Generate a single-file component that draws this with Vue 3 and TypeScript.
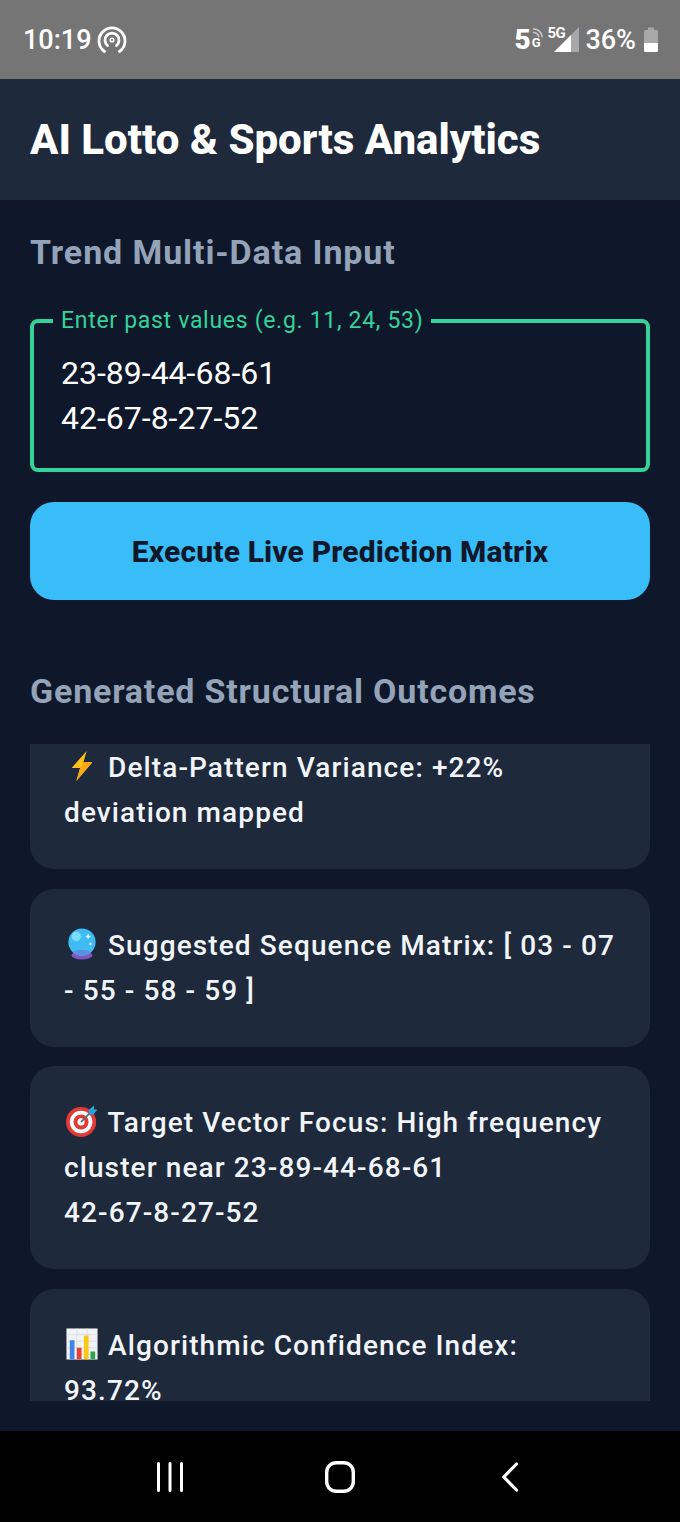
<script setup lang="ts">
import { onMounted, ref } from 'vue'

const results = [
  { icon: 'bolt', text: 'Delta-Pattern Variance: +22% deviation mapped' },
  { icon: 'ball', text: 'Suggested Sequence Matrix: [ 03 - 07 - 55 - 58 - 59 ]' },
  { icon: 'target', text: 'Target Vector Focus: High frequency cluster near 23-89-44-68-61\n42-67-8-27-52' },
  { icon: 'chart', text: 'Algorithmic Confidence Index: 93.72%' },
]

const pastValues = ref('23-89-44-68-61\n42-67-8-27-52')
const listEl = ref<HTMLElement | null>(null)

onMounted(() => {
  // the list sits slightly scrolled in the capture
  if (listEl.value) listEl.value.scrollTop = 33
})
</script>

<template>
  <div class="phone">
    <div class="status-bar">
      <div class="status-left">
        <span>10:19</span>
        <svg class="hotspot" width="30" height="28" viewBox="0 0 30 28" fill="none" stroke="#fff" stroke-linecap="round">
          <path d="M7.5 25.5A13 13 0 1 1 22.5 25.5" stroke-width="2.8" />
          <path d="M10.5 19.5A7 7 0 1 1 19.5 19.5" stroke-width="2.8" />
          <circle cx="15" cy="14" r="1.8" stroke-width="1.6" />
        </svg>
      </div>
      <div class="status-right">
        <span class="net"><b>5</b><i>G</i>
          <svg class="net-waves" width="12" height="12" viewBox="0 0 14 14" fill="none" stroke="#c9c9c9" stroke-width="1.8">
            <path d="M1 2.5A10 10 0 0 1 12 12" />
            <path d="M1 6.5A6 6 0 0 1 8 12" />
          </svg>
        </span>
        <span class="signal">
          <span class="signal-label">5G</span>
          <svg width="25" height="25" viewBox="0 0 25 25">
            <path d="M25 0V25H0Z" fill="#a8a8a8" />
            <path d="M17 8V25H0Z" fill="#fff" />
          </svg>
        </span>
        <span class="battery-text">36%</span>
        <svg width="14" height="25" viewBox="0 0 14 25">
          <path d="M4 0.500H10V3H12.500A1.500 1.500 0 0 1 14 4.500V23.500A1.500 1.500 0 0 1 12.500 25H1.500A1.500 1.500 0 0 1 0 23.500V4.500A1.500 1.500 0 0 1 1.500 3H4Z" fill="#a8a8a8" />
          <path d="M0 16H14V23.500A1.500 1.500 0 0 1 12.500 25H1.500A1.500 1.500 0 0 1 0 23.500Z" fill="#fff" />
        </svg>
      </div>
    </div>

    <header class="app-header">
      <h1>AI Lotto &amp; Sports Analytics</h1>
    </header>

    <main class="content">
      <h2 class="section-title">Trend Multi-Data Input</h2>

      <fieldset class="input-box">
        <legend>Enter past values (e.g. 11, 24, 53)</legend>
        <textarea v-model="pastValues" rows="2" spellcheck="false"></textarea>
      </fieldset>

      <button class="run-btn" type="button">Execute Live Prediction Matrix</button>

      <h2 class="section-title outcomes">Generated Structural Outcomes</h2>

      <div ref="listEl" class="result-list">
        <div v-for="item in results" :key="item.icon" class="result-card">
          <svg v-if="item.icon === 'bolt'" class="emoji" viewBox="0 0 34 34">
            <path d="M22 1 6 19H15L11 33 28 13H18.500Z" fill="#fcc21b" />
            <path d="M18.500 13H28L11 33 15 19Z" fill="#f7a817" />
          </svg>
          <svg v-else-if="item.icon === 'ball'" class="emoji" viewBox="0 0 34 34">
            <ellipse cx="17" cy="29" rx="11" ry="4.500" fill="#7e57c2" />
            <circle cx="17" cy="15" r="14.500" fill="#3fbdf3" />
            <ellipse cx="17" cy="26" rx="9" ry="3" fill="#5c8fe0" />
            <circle cx="11" cy="9" r="5" fill="#7fdcfb" />
            <path d="M23.500 6l1 2 2 1-2 1-1 2-1-2-2-1 2-1zM26 15l.7 1.300 1.300.7-1.300.7-.7 1.300-.7-1.300-1.300-.7 1.300-.7z" fill="#d6f3ff" />
          </svg>
          <svg v-else-if="item.icon === 'target'" class="emoji" viewBox="0 0 34 34">
            <circle cx="16" cy="18" r="16" fill="#e53935" />
            <circle cx="16" cy="18" r="12" fill="#fff" />
            <circle cx="16" cy="18" r="8" fill="#e53935" />
            <circle cx="16" cy="18" r="3.800" fill="#fff" />
            <path d="M16 18 27 7" stroke="#546e7a" stroke-width="1.800" />
            <path d="M24 5.500 29.500 0.500 30 4.500 33.500 5 28.500 10.500 25 10Z" fill="#29a3d8" />
          </svg>
          <svg v-else class="emoji" viewBox="0 0 34 34">
            <rect x="0.500" y="0.500" width="33" height="33" fill="#f1f3f4" />
            <path d="M0.500 7H33.500M0.500 14H33.500M0.500 21H33.500M0.500 28H33.500M11.500 0.500V33.500M22.500 0.500V33.500" stroke="#d5d9dc" stroke-width="0.800" />
            <rect x="4" y="13" width="5" height="20" fill="#3f84ea" />
            <rect x="11.500" y="21" width="5" height="12" fill="#e8402e" />
            <rect x="19" y="8" width="5" height="25" fill="#fbc813" />
            <rect x="26" y="25" width="5" height="8" fill="#2ba24c" />
          </svg>
          {{ item.text }}
        </div>
      </div>
    </main>

    <nav class="nav-bar">
      <svg width="30" height="30" viewBox="0 0 30 30" fill="none" stroke="#fff" stroke-width="3" stroke-linecap="round">
        <path d="M3.500 1.500V28.500M15 1.500V28.500M26.500 1.500V28.500" />
      </svg>
      <svg width="30" height="32" viewBox="0 0 30 32" fill="none" stroke="#fff" stroke-width="3.400">
        <rect x="1.700" y="1.700" width="26.600" height="28.600" rx="9.500" />
      </svg>
      <svg width="30" height="30" viewBox="0 0 30 30" fill="none" stroke="#fff" stroke-width="3.200" stroke-linecap="round" stroke-linejoin="round">
        <path d="M21.500 2 8.700 15 21.500 28" />
      </svg>
    </nav>
  </div>
</template>

<style scoped>
.phone {
  width: 680px;
  height: 1522px;
  display: flex;
  flex-direction: column;
  overflow: hidden;
  background: #0f172a;
  font-family: Roboto, "Liberation Sans", sans-serif;
  color: #f1f5f9;
}

.status-bar {
  height: 79px;
  flex: none;
  display: flex;
  align-items: center;
  justify-content: space-between;
  padding: 0 22px 0 23px;
  background: #757575;
  color: #fff;
  font-size: 27px;
  font-weight: 500;
}

.status-left,
.status-right {
  display: flex;
  align-items: center;
}

.hotspot {
  margin-left: 5px;
}

.net {
  position: relative;
  width: 30px;
  height: 25px;
  display: flex;
  align-items: flex-end;
  line-height: 1;
}

.net b {
  font-size: 28px;
  font-weight: 900;
  line-height: 25px;
}

.net i {
  font-style: normal;
  font-size: 13px;
  font-weight: 700;
  margin-left: 1px;
  line-height: 18px;
}

.net-waves {
  position: absolute;
  top: 0;
  right: 0;
}

.signal {
  position: relative;
  width: 32px;
  height: 25px;
  margin-left: 3px;
  display: flex;
  justify-content: flex-end;
  align-items: flex-end;
}

.signal-label {
  position: absolute;
  left: 0;
  top: -1px;
  font-size: 15px;
  font-weight: 700;
  line-height: 1;
  letter-spacing: -0.5px;
}

.battery-text {
  margin: 0 8px 0 6px;
}

.app-header {
  height: 121px;
  flex: none;
  display: flex;
  align-items: center;
  padding: 0 30px;
  background: #1e293b;
}

.app-header h1 {
  margin: 0;
  font-size: 42px;
  font-weight: 800;
  color: #fff;
}

.content {
  flex: 1;
  min-height: 0;
  display: flex;
  flex-direction: column;
  padding: 30px 30px 30px;
}

.section-title {
  margin: 0;
  font-size: 34px;
  line-height: 45px;
  font-weight: 700;
  letter-spacing: 0.9px;
  color: #94a3b8;
}

.input-box {
  margin: 33px 0 0;
  padding: 0 27px 20px;
  height: 164px;
  box-sizing: border-box;
  border: 4px solid #34d399;
  border-radius: 8px;
  min-width: 0;
}

.input-box legend {
  padding: 0 8px;
  margin-left: -8px;
  font-size: 23px;
  line-height: 26px;
  letter-spacing: 0.7px;
  color: #34d399;
}

.input-box textarea {
  display: block;
  width: 100%;
  margin-top: 17px;
  padding: 0;
  border: 0;
  outline: 0;
  resize: none;
  background: transparent;
  font: 400 32px/45px Roboto, "Liberation Sans", sans-serif;
  color: #fff;
}

.run-btn {
  flex: none;
  height: 98px;
  margin-top: 30px;
  border: 0;
  border-radius: 24px;
  background: #38bdf8;
  font-family: inherit;
  font-size: 30px;
  font-weight: 800;
  letter-spacing: 0.15px;
  color: #0f172a;
}

.outcomes {
  margin-top: 69px;
  letter-spacing: 0.8px;
}

.result-list {
  flex: none;
  height: 657px;
  margin-top: 30px;
  display: flex;
  flex-direction: column;
  gap: 19.5px;
  overflow-y: auto;
  scrollbar-width: none;
}

.result-card {
  flex: none;
  padding: 34px;
  border-radius: 24px;
  background: #1e293b;
  font-size: 28px;
  font-weight: 500;
  line-height: 45px;
  letter-spacing: 1.1px;
  color: #f1f5f9;
  white-space: pre-line;
}

.emoji {
  display: inline-block;
  width: 32px;
  height: 34px;
  margin: 0 2px 0 2px;
  vertical-align: -6px;
}

.nav-bar {
  height: 91px;
  flex: none;
  display: flex;
  align-items: center;
  padding: 0 155px;
  justify-content: space-between;
  background: #000;
}
</style>
